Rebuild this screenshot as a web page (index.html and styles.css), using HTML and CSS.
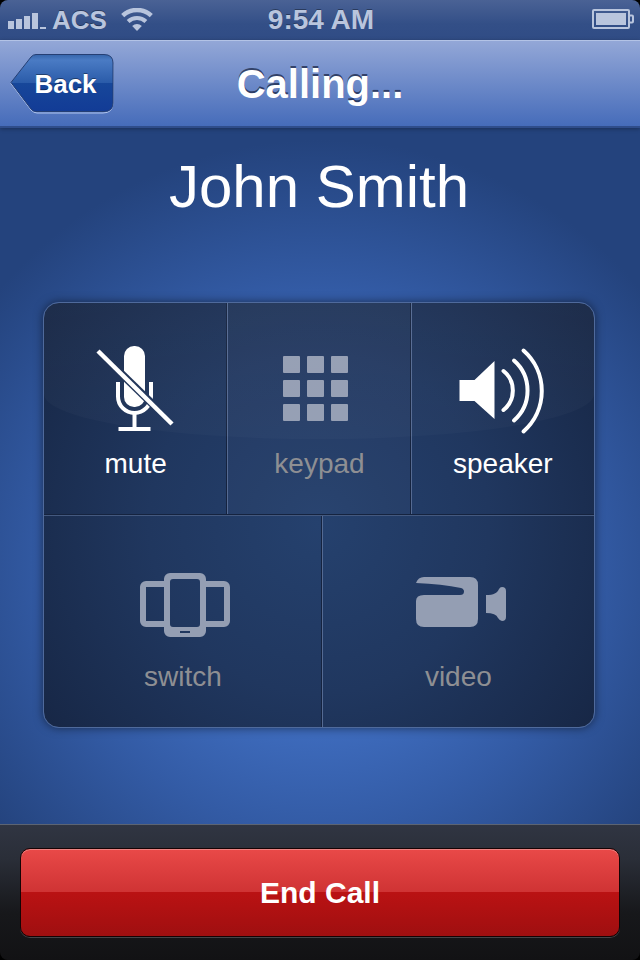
FILE: index.html
```html
<!DOCTYPE html>
<html lang="en">
<head>
    <meta charset="UTF-8">
    <meta name="viewport" content="width=device-width, initial-scale=1.0">
    <title>Calling...</title>
    <link rel="stylesheet" href="styles.css">
</head>
<body>
    <div class="status-bar">
        <div class="status-left">
            <svg class="signal" width="38" height="18" viewBox="0 0 38 18" fill="currentColor" aria-hidden="true">
                <path d="M0 10h6v8H0zM8 8h6v10H8zM16 5h6v13h-6zM24 2h6v16h-6zM32 16h6v2h-6z"/>
            </svg>
            <span class="carrier">ACS</span>
            <svg class="wifi" width="32" height="24" viewBox="0 0 32 24" fill="none" stroke="currentColor" aria-hidden="true">
                <path d="M1.7 7.6a21 21 0 0 1 28.6 0" stroke-width="4.5"/>
                <path d="M7.1 13.5a13 13 0 0 1 17.8 0" stroke-width="4"/>
                <path d="M16 23l-4.8-5.1a7 7 0 0 1 9.6 0z" fill="currentColor" stroke="none"/>
            </svg>
        </div>
        <span class="time">9:54 AM</span>
        <svg class="battery" width="42" height="22" viewBox="0 0 42 22" fill="none" stroke="currentColor" stroke-width="2" aria-hidden="true">
            <rect x="1" y="1" width="36" height="18" rx="1"/>
            <rect x="4" y="4" width="30" height="12" fill="currentColor" stroke="none"/>
            <path d="M38 6.500h2a1 1 0 0 1 1 1v5a1 1 0 0 1-1 1h-2"/>
        </svg>
    </div>

    <header class="nav-bar">
        <button type="button" class="back-button">
            <svg class="back-shape" width="104" height="60" viewBox="0 0 104 60" aria-hidden="true">
                <defs>
                    <linearGradient id="back-fill" x1="0" y1="0" x2="0" y2="1">
                        <stop offset="0" stop-color="#3565ab"/>
                        <stop offset="0.1" stop-color="#4a7bc4"/>
                        <stop offset="0.5" stop-color="#2a5ba9"/>
                        <stop offset="0.5" stop-color="#17479a"/>
                        <stop offset="1" stop-color="#123b96"/>
                    </linearGradient>
                </defs>
                <path d="M1 29.500L21 4Q24 1.500 27 1.500H93Q103 1.500 103 11V49Q103 59 93 59H27Q24 59 21 56z" fill="none" stroke="#b0c4ec" stroke-width="1"/>
                <path d="M1 28.500L21 3Q23 .5 26 .5H94Q103 .5 103 9V49Q103 57.500 94 57.500H26Q23 57.500 21 55z" fill="url(#back-fill)" stroke="#253f74" stroke-width="1"/>
            </svg>
            <span class="back-label">Back</span>
        </button>
        <h1 class="nav-title">Calling...</h1>
    </header>

    <main class="call-screen">
        <h2 class="contact-name">John Smith</h2>

        <div class="call-panel">
            <div class="panel-row row-three">
                <button type="button" class="call-option">
                    <svg width="100" height="92" viewBox="0 0 100 92" fill="none" stroke="currentColor" aria-hidden="true">
                        <defs>
                            <mask id="slash-gap" maskUnits="userSpaceOnUse" x="0" y="0" width="100" height="92">
                                <rect width="100" height="92" fill="#fff" stroke="none"/>
                                <path d="M11 6L87 80" stroke="#000" stroke-width="8"/>
                            </mask>
                        </defs>
                        <g mask="url(#slash-gap)">
                            <rect x="38" y="2" width="21" height="61" rx="10" fill="currentColor" stroke="none"/>
                            <path d="M32 38v14.500a16.500 16.500 0 0 0 33 0V38" stroke-width="4"/>
                        </g>
                        <path d="M48.500 70v14M32.500 85h32" stroke-width="4"/>
                        <path d="M12 7L86 80" stroke-width="4.500"/>
                    </svg>
                    <span class="option-label">mute</span>
                </button>
                <button type="button" class="call-option keypad" disabled>
                    <svg width="100" height="92" viewBox="0 0 100 92" fill="currentColor" aria-hidden="true">
                        <rect x="14" y="12" width="17" height="17" rx="1"/>
                        <rect x="38" y="12" width="17" height="17" rx="1"/>
                        <rect x="62" y="12" width="17" height="17" rx="1"/>
                        <rect x="14" y="36" width="17" height="17" rx="1"/>
                        <rect x="38" y="36" width="17" height="17" rx="1"/>
                        <rect x="62" y="36" width="17" height="17" rx="1"/>
                        <rect x="14" y="60" width="17" height="17" rx="1"/>
                        <rect x="38" y="60" width="17" height="17" rx="1"/>
                        <rect x="62" y="60" width="17" height="17" rx="1"/>
                    </svg>
                    <span class="option-label">keypad</span>
                </button>
                <button type="button" class="call-option">
                    <svg width="100" height="92" viewBox="0 0 100 92" fill="none" stroke="currentColor" stroke-width="4" stroke-linecap="round" aria-hidden="true">
                        <path d="M6.500 36h15l20-19v58l-20-18h-15z" fill="currentColor" stroke="none"/>
                        <path d="M50.500 27a25 25 0 0 1 0 39"/>
                        <path d="M61 16.500a40 40 0 0 1 0 60"/>
                        <path d="M70.500 6.500a54 54 0 0 1 0 81"/>
                    </svg>
                    <span class="option-label">speaker</span>
                </button>
            </div>
            <div class="panel-row row-two">
                <button type="button" class="call-option" disabled>
                    <svg width="100" height="92" viewBox="0 0 100 92" fill="none" stroke="currentColor" stroke-width="6" aria-hidden="true">
                        <path d="M31 27H13a3 3 0 0 0-3 3v34a3 3 0 0 0 3 3h18M73 27h18a3 3 0 0 1 3 3v34a3 3 0 0 1-3 3H73"/>
                        <path d="M37 16h30a6 6 0 0 1 6 6v52a6 6 0 0 1-6 6H37a6 6 0 0 1-6-6V22a6 6 0 0 1 6-6zM40 22a3 3 0 0 0-3 3v42a3 3 0 0 0 3 3h24a3 3 0 0 0 3-3V25a3 3 0 0 0-3-3zM47 74v2h10v-2z" fill="currentColor" fill-rule="evenodd" stroke="none"/>
                    </svg>
                    <span class="option-label">switch</span>
                </button>
                <button type="button" class="call-option" disabled>
                    <svg width="100" height="92" viewBox="0 0 100 92" fill="currentColor" aria-hidden="true">
                        <path d="M8 26Q10 20 16 20H62Q70 20 70 28V62Q70 70 62 70H16Q8 70 8 62V44Q8 38 16 38H52Q56 38 56 34.500Q56 32 53 31Q34 27 8 26z"/>
                        <path d="M78 38C86 38 89 36 91 32Q92 30 94 30Q98 30 98 34V60Q98 64 94 64Q92 64 90 61Q88 56 78 56z"/>
                    </svg>
                    <span class="option-label">video</span>
                </button>
            </div>
        </div>
    </main>

    <footer class="bottom-bar">
        <button type="button" class="end-button">End Call</button>
    </footer>
</body>
</html>
```
FILE: styles.css
```css
* {
    box-sizing: border-box;
}
body {
    margin: 0;
    min-height: 100vh;
    display: flex;
    flex-direction: column;
    background-color: #000;
    color: #fff;
    font-family: "Liberation Sans", Arial, sans-serif;
}
button {
    margin: 0;
    padding: 0;
    border: none;
    background: none;
    color: inherit;
    font-family: inherit;
    cursor: pointer;
}
svg {
    display: block;
}

/* status bar */
.status-bar {
    display: grid;
    grid-template-columns: 1fr auto 1fr;
    align-items: center;
    height: 40px;
    padding: 0 6px 0 8px;
    border-radius: 8px 8px 0 0;
    background: linear-gradient(#4a6295, #334f87 60%, #304c85);
    color: #b9c5dd;
    font-weight: bold;
    text-shadow: 0 -1px 0 rgba(0,0,0,0.35);
}
.status-left {
    display: flex;
    align-items: center;
    gap: 6px;
}
.carrier {
    font-size: 26px;
    line-height: 32px;
}
.wifi {
    margin-left: 8px;
}
.time {
    font-size: 28px;
    line-height: 32px;
}
.battery {
    justify-self: end;
}

/* navigation bar */
.nav-bar {
    position: relative;
    display: grid;
    grid-template-columns: 1fr auto 1fr;
    align-items: center;
    height: 88px;
    padding: 0 10px;
    border-top: 1px solid #b3c3e6;
    border-bottom: 2px solid #2f4d8b;
    background: linear-gradient(#93a7d7, #466cba);
    box-shadow: 0 1px 4px rgba(0,0,0,0.3);
}
.back-button {
    position: relative;
    justify-self: start;
    width: 104px;
    height: 60px;
    padding-left: 7px;
    font-size: 26px;
    font-weight: bold;
    line-height: 32px;
    text-shadow: 0 -1px 0 rgba(0,0,0,0.4);
}
.back-shape {
    position: absolute;
    top: 0;
    left: 0;
}
.back-label {
    position: relative;
}
.nav-title {
    margin: 0;
    font-size: 40px;
    line-height: 48px;
    text-shadow: 0 -2px 0 rgba(20,30,60,0.7);
}

/* call screen */
.call-screen {
    flex: 1;
    padding: 25px 45px 96px 43px;
    background: radial-gradient(circle at 50% 432px, #3d6abb 175px, #335ba5 270px, #24437d 420px);
}
.contact-name {
    margin: 0 0 81px;
    font-size: 60px;
    font-weight: normal;
    line-height: 68px;
    text-align: center;
}
.call-panel {
    position: relative;
    overflow: hidden;
    border: 1px solid #4f6a9c;
    border-radius: 16px;
    background: radial-gradient(ellipse 340px 340px at 50% 52%, #25416e, #20375f 50%, #172746);
    box-shadow: 0 0 10px rgba(0,0,0,0.5);
}
/* glossy highlight over the upper part */
.call-panel::before {
    content: "";
    position: absolute;
    top: 0;
    left: 0;
    right: 0;
    height: 136px;
    border-radius: 0 0 50% 50% / 0 0 45px 45px;
    background: linear-gradient(rgba(255,255,255,0.03), rgba(255,255,255,0.02));
    pointer-events: none;
}
.panel-row {
    display: grid;
}
.row-three {
    grid-template-columns: repeat(3, 1fr);
    border-bottom: 1px solid #15233f;
}
.row-two {
    grid-template-columns: 102fr 100fr;
    border-top: 1px solid #44597f;
}
.call-option {
    display: flex;
    flex-direction: column;
    align-items: center;
    gap: 12px;
    padding: 41px 0 34px;
    color: #fff;
    font-size: 28px;
    line-height: 32px;
}
.call-option + .call-option {
    border-left: 1px solid #556a92;
    box-shadow: -1px 0 0 #15233f;
}
.call-option:disabled {
    color: #949eb3;
    cursor: default;
}
.call-option:disabled .option-label {
    color: #8e8f93;
}
.keypad {
    background-color: rgba(255,255,255,0.02);
}

/* bottom bar */
.bottom-bar {
    padding: 23px 20px;
    border-top: 1px solid #5c6473;
    border-radius: 0 0 8px 8px;
    background: linear-gradient(#303542, #2a2e38 25%, #17181b 65%, #121214);
}
.end-button {
    display: block;
    width: 100%;
    height: 89px;
    border: 1px solid #150304;
    border-radius: 10px;
    background: linear-gradient(#e94948, #cf3334 50%, #ba1213 50%, #9f0f10);
    box-shadow: inset 0 1px 0 #ee8382, 0 1px 0 #444448;
    font-size: 30px;
    font-weight: bold;
    line-height: 36px;
}
```
